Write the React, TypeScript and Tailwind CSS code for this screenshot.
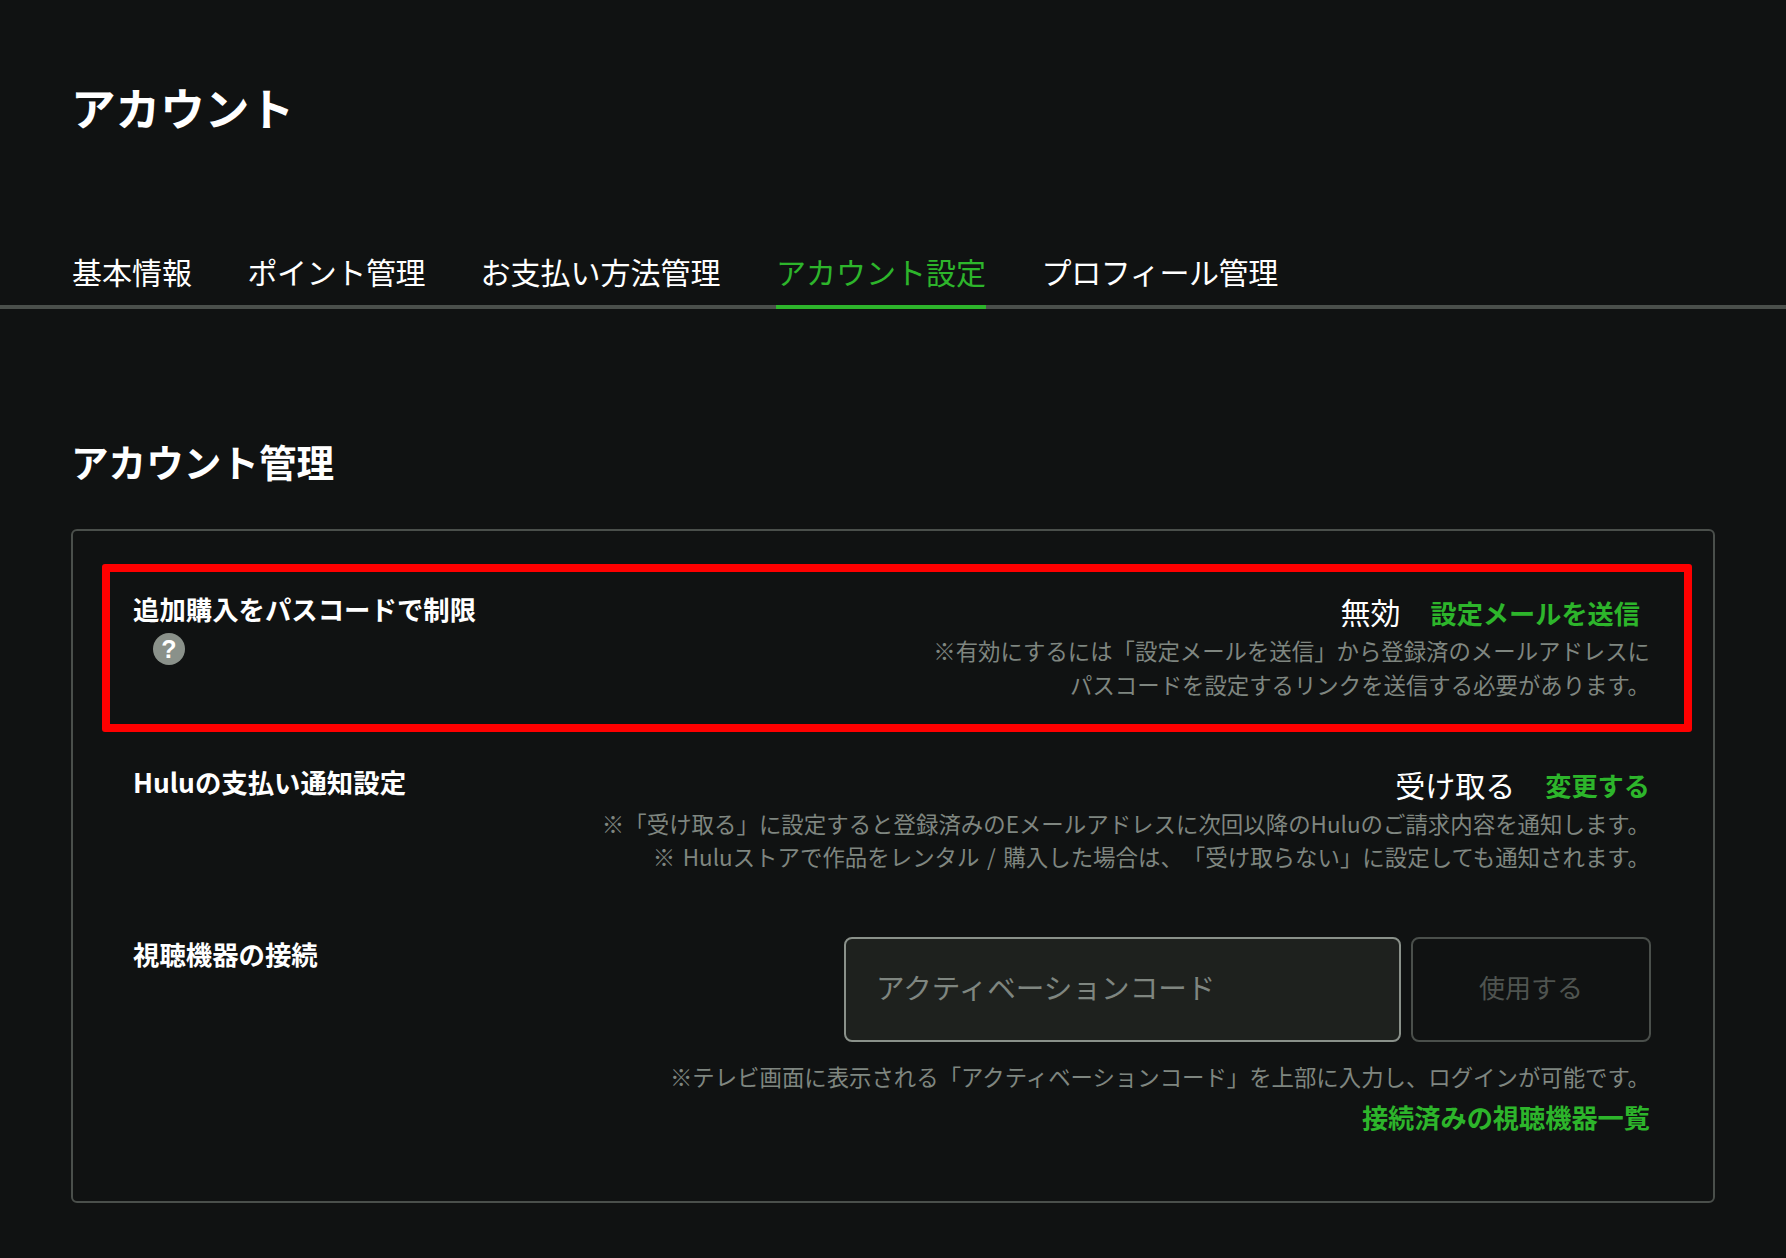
import React from "react";

const tabs = ["基本情報", "ポイント管理", "お支払い方法管理", "アカウント設定", "プロフィール管理"];

const App: React.FC = () => {
  return (
    <div className="min-h-screen bg-[#101212] text-white font-['Noto_Sans_CJK_JP','Noto_Sans',sans-serif]">
      <h1 className="pt-[79px] pl-[71px] text-[44.6px] leading-[56px] font-bold">アカウント</h1>

      {/* Tabs */}
      <nav className="mt-[114px] flex h-[60px] gap-[55.5px] border-b-4 border-[#4a4f4b] pl-[72px]">
        {tabs.map((tab) => (
          <div
            key={tab}
            className={
              tab === "アカウント設定"
                ? "h-[60px] border-b-4 border-[#2db52b] text-[30px] leading-[44px] text-[#2db52b]"
                : tab === "ポイント管理" || tab === "プロフィール管理"
                  ? "text-[30px] leading-[44px] tracking-[-0.4px]"
                  : "text-[30px] leading-[44px]"
            }
          >
            {tab}
          </div>
        ))}
      </nav>

      <h2 className="mt-[127px] pl-[71px] text-[37.6px] leading-[50px] font-bold">アカウント管理</h2>

      {/* Account settings box */}
      <section className="mx-[71px] mt-[43px] rounded-md border-2 border-[#4a4f4b] pt-[33px] pb-[62px]">
        <div className="ml-[29px] mr-[21px] flex h-[168px] justify-between rounded-[3px] border-8 border-[#ff0000] pl-[23px] pr-[34px] pt-[17px]">
          <div className="pt-[3px]">
            <div className="text-[26.4px] leading-[34px] font-bold">追加購入をパスコードで制限</div>
            <div className="ml-[20px] mt-[7px] flex h-8 w-8 items-center justify-center rounded-full bg-[#8a918a] text-[25px] leading-none font-bold font-['Liberation_Sans',sans-serif]">
              ?
            </div>
          </div>
          <div className="text-right">
            <div className="flex items-center justify-end pr-[10px] h-[44px]">
              <span className="text-[30px] leading-[44px]">無効</span>
              <a className="ml-[30px] pt-[4px] text-[26.2px] leading-[44px] font-bold text-[#2db52b]">設定メールを送信</a>
            </div>
            <p className="text-[22.4px] leading-[34px] text-[#7f8680]">
              ※有効にするには「設定メールを送信」から登録済のメールアドレスに
              <br />
              パスコードを設定するリンクを送信する必要があります。
            </p>
          </div>
        </div>

        <div className="mt-[30px] flex justify-between pl-[60px] pr-[63px]">
          <div className="pt-[3px] text-[26.4px] leading-[34px] font-bold">Huluの支払い通知設定</div>
          <div className="text-right">
            <div className="flex h-[44px] items-center justify-end">
              <span className="text-[30px] leading-[44px]">受け取る</span>
              <a className="ml-[30px] pt-[2px] text-[26.2px] leading-[44px] font-bold text-[#2db52b]">変更する</a>
            </div>
            <p className="mt-px text-[22.45px] leading-[33px] text-[#7f8680] [text-spacing-trim:space-all] [word-spacing:2.5px]">
              ※「受け取る」に設定すると登録済みのEメールアドレスに次回以降のHuluのご請求内容を通知します。
              <br />
              ※ Huluストアで作品をレンタル / 購入した場合は、「受け取らない」に設定しても通知されます。
            </p>
          </div>
        </div>

        <div className="mt-[64px] flex justify-between pl-[60px] pr-[63px]">
          <div className="text-[26.4px] leading-[34px] font-bold">視聴機器の接続</div>
          <div className="text-right">
            <div className="flex justify-end gap-[10px]">
              <input
                placeholder="アクティベーションコード"
                className="h-[105px] w-[557px] rounded-lg border-2 border-[#8a918a] bg-[#1e211e] px-[30px] pb-[6px] text-[28.6px] text-white outline-none placeholder:text-[#7f8680]"
              />
              <button className="-mr-px h-[105px] w-[240px] rounded-lg border-2 border-[#4a4f4b] bg-transparent pb-[6px] text-[26px] text-[#4f5450]">
                使用する
              </button>
            </div>
            <p className="mt-[17px] text-[22.4px] leading-[34px] text-[#7f8680]">
              ※テレビ画面に表示される「アクティベーションコード」を上部に入力し、ログインが可能です。
            </p>
            <a className="mt-[2px] block text-[26.2px] leading-[44px] font-bold text-[#2db52b]">接続済みの視聴機器一覧</a>
          </div>
        </div>
      </section>
    </div>
  );
};

export default App;
